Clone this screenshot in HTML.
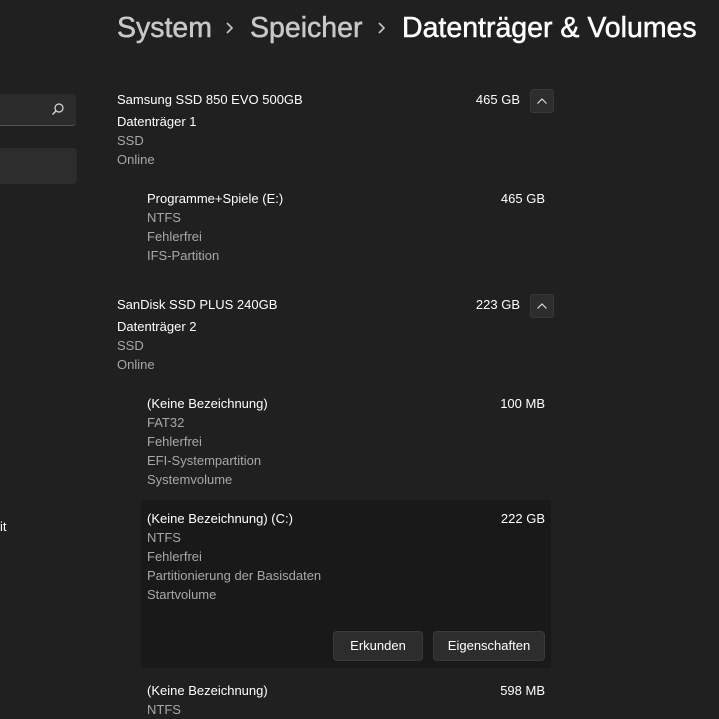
<!DOCTYPE html>
<html><head><meta charset="utf-8"><style>
body{margin:0;width:719px;height:717px;background:#202020;overflow:hidden;font-family:"Segoe UI","Liberation Sans",sans-serif;color:#fff;position:relative}
.a{position:absolute;font-size:13px;white-space:nowrap;line-height:19px}
.r{position:absolute;font-size:13px;white-space:nowrap;line-height:19px;text-align:right;width:100px}
.g{color:#a8a8a8}
.t{position:absolute;top:10px;font-size:28.5px;font-weight:normal;-webkit-text-stroke:0.5px currentColor;white-space:nowrap;line-height:36px}
.chev{position:absolute;width:24px;height:24px;background:#2d2d2d;border:1px solid #383838;border-radius:3px;box-sizing:border-box}
.btn{position:absolute;top:631px;height:30px;background:#2d2d2d;border:1px solid #3a3a3a;border-radius:4px;box-sizing:border-box;font-size:13px;line-height:28px;text-align:center}
</style></head><body>
<div class="t" style="left:117px;color:#c8c8c8">System</div>
<svg style="position:absolute;left:224px;top:21px" width="10" height="14" viewBox="0 0 10 14"><path d="M3 2 L8 7 L3 12" stroke="#c8c8c8" stroke-width="1.6" fill="none"/></svg>
<div class="t" style="left:250px;color:#c8c8c8">Speicher</div>
<svg style="position:absolute;left:376px;top:21px" width="10" height="14" viewBox="0 0 10 14"><path d="M3 2 L8 7 L3 12" stroke="#c8c8c8" stroke-width="1.6" fill="none"/></svg>
<div class="t" style="left:402px">Datenträger &amp; Volumes</div>

<div style="position:absolute;left:-10px;top:94px;width:86px;height:31px;background:#2c2c2c;border-radius:4px;border-bottom:1px solid #555"></div>
<svg style="position:absolute;left:51px;top:102px" width="14" height="14" viewBox="0 0 14 14"><circle cx="8" cy="6" r="4" stroke="#ddd" stroke-width="1.2" fill="none"/><line x1="5" y1="9" x2="1.5" y2="12.5" stroke="#ddd" stroke-width="1.3"/></svg>
<div style="position:absolute;left:-10px;top:148px;width:87px;height:36px;background:#2d2d2d;border-radius:4px"></div>
<div class="a" style="left:0;top:517px">it</div>

<div class="a" style="left:117px;top:90px">Samsung SSD 850 EVO 500GB</div>
<div class="r" style="left:420px;top:90px">465 GB</div>
<div class="chev" style="left:530px;top:89px"><svg width="22" height="22" viewBox="0 0 22 22"><path d="M6.5 13.5 L11 9 L15.5 13.5" stroke="#ddd" stroke-width="1.2" fill="none"/></svg></div>
<div class="a" style="left:117px;top:112px">Datenträger 1</div>
<div class="a g" style="left:117px;top:131px">SSD</div>
<div class="a g" style="left:117px;top:150px">Online</div>

<div class="a" style="left:147px;top:189px">Programme+Spiele (E:)</div>
<div class="r" style="left:445px;top:189px">465 GB</div>
<div class="a g" style="left:147px;top:208px">NTFS</div>
<div class="a g" style="left:147px;top:227px">Fehlerfrei</div>
<div class="a g" style="left:147px;top:246px">IFS-Partition</div>

<div class="a" style="left:117px;top:295px">SanDisk SSD PLUS 240GB</div>
<div class="r" style="left:420px;top:295px">223 GB</div>
<div class="chev" style="left:530px;top:294px"><svg width="22" height="22" viewBox="0 0 22 22"><path d="M6.5 13.5 L11 9 L15.5 13.5" stroke="#ddd" stroke-width="1.2" fill="none"/></svg></div>
<div class="a" style="left:117px;top:317px">Datenträger 2</div>
<div class="a g" style="left:117px;top:336px">SSD</div>
<div class="a g" style="left:117px;top:355px">Online</div>

<div class="a" style="left:147px;top:394px">(Keine Bezeichnung)</div>
<div class="r" style="left:445px;top:394px">100 MB</div>
<div class="a g" style="left:147px;top:413px">FAT32</div>
<div class="a g" style="left:147px;top:432px">Fehlerfrei</div>
<div class="a g" style="left:147px;top:451px">EFI-Systempartition</div>
<div class="a g" style="left:147px;top:470px">Systemvolume</div>

<div style="position:absolute;left:141px;top:500px;width:410px;height:168px;background:#191919"></div>
<div class="a" style="left:147px;top:509px">(Keine Bezeichnung) (C:)</div>
<div class="r" style="left:445px;top:509px">222 GB</div>
<div class="a g" style="left:147px;top:528px">NTFS</div>
<div class="a g" style="left:147px;top:547px">Fehlerfrei</div>
<div class="a g" style="left:147px;top:566px">Partitionierung der Basisdaten</div>
<div class="a g" style="left:147px;top:585px">Startvolume</div>
<div class="btn" style="left:333px;width:90px">Erkunden</div>
<div class="btn" style="left:433px;width:112px">Eigenschaften</div>

<div class="a" style="left:147px;top:681px">(Keine Bezeichnung)</div>
<div class="r" style="left:445px;top:681px">598 MB</div>
<div class="a g" style="left:147px;top:700px">NTFS</div>
</body></html>
